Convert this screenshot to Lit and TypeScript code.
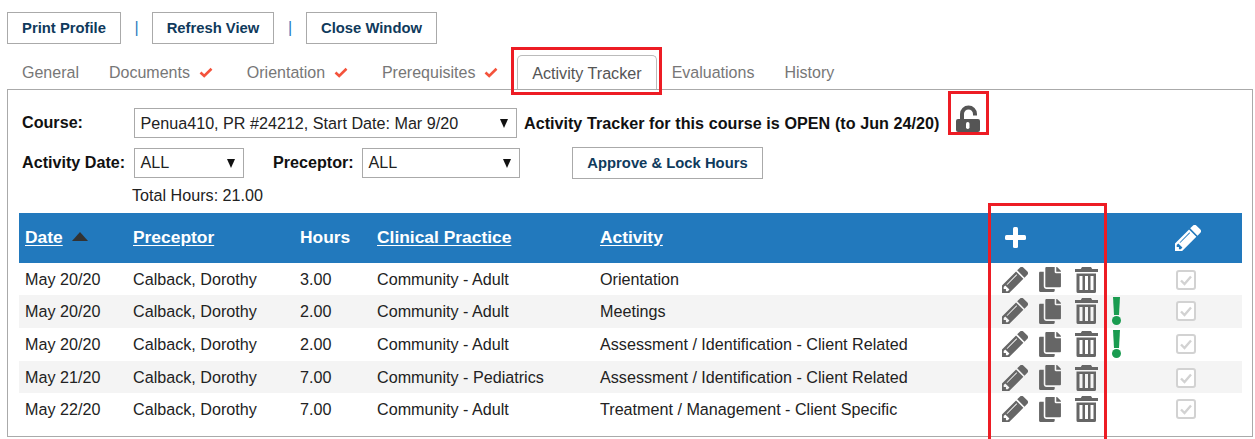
import { LitElement, html, css, svg } from "lit";
import { customElement } from "lit/decorators.js";

const PENCIL = "M491 1536l91-91-235-235-91 91v107h128v128h107zm523-928q0-22-22-22-10 0-17 7l-542 542q-7 7-7 17 0 22 22 22 10 0 17-7l542-542q7-7 7-17zm-54-192l416 416-832 832h-416v-416zm683 96q0 53-37 90l-166 166-416-416 166-165q36-38 90-38 53 0 91 38l235 234q37 39 37 91z";
const COPY = "M320 448v40c0 13.255-10.745 24-24 24H24c-13.255 0-24-10.745-24-24V120c0-13.255 10.745-24 24-24h72v296c0 30.879 25.121 56 56 56h168zm0-344V0H152c-13.255 0-24 10.745-24 24v368c0 13.255 10.745 24 24 24h272c13.255 0 24-10.745 24-24V128H344c-13.2 0-24-10.8-24-24zm120.971-31.029L375.029 7.029A24 24 0 0 0 358.059 0H352v96h96v-6.059a24 24 0 0 0-7.029-16.97z";
const TRASH = "M7 0h9l1.2 2H23v3H0V2h5.8zM1.5 6.5h19.5V24.5q0 1.5-1.5 1.5H3q-1.5 0-1.5-1.5zM4.5 9v14h3V9zM10 9v14h3V9zM15.5 9v14h3V9z";

const pencil = (c: string) => svg`<svg class=${c} viewBox="160 160 1480 1480" fill="currentColor"><path d=${PENCIL}/></svg>`;
const copy = () => svg`<svg class="copy" viewBox="0 0 448 512" fill="currentColor"><path d=${COPY}/></svg>`;
const trash = () => svg`<svg class="trash" viewBox="0 0 23 26" fill="currentColor"><path fill-rule="evenodd" d=${TRASH}/></svg>`;
const tick = () => svg`<svg class="tick" viewBox="0 0 14 11"><path d="M1.5 5.5 5.2 9 12.5 1.8" fill="none" stroke="#f4533c" stroke-width="2.6"/></svg>`;
const box = () => svg`<svg class="box" viewBox="0 0 20 20"><rect x="1" y="1" width="18" height="18" rx="2" fill="#fff" stroke="#d2d2d2" stroke-width="2"/><path d="M5 10.5 8.5 14 15 6.5" fill="none" stroke="#d2d2d2" stroke-width="2.4"/></svg>`;

const TABS = [
  { t: "General" }, { t: "Documents", c: 1 }, { t: "Orientation", c: 1 }, { t: "Prerequisites", c: 1 },
  { t: "Activity Tracker", a: 1 }, { t: "Evaluations" }, { t: "History" },
];
const ROWS = [
  ["May 20/20", "Calback, Dorothy", "3.00", "Community - Adult", "Orientation", 0],
  ["May 20/20", "Calback, Dorothy", "2.00", "Community - Adult", "Meetings", 1],
  ["May 20/20", "Calback, Dorothy", "2.00", "Community - Adult", "Assessment / Identification - Client Related", 1],
  ["May 21/20", "Calback, Dorothy", "7.00", "Community - Pediatrics", "Assessment / Identification - Client Related", 0],
  ["May 22/20", "Calback, Dorothy", "7.00", "Community - Adult", "Treatment / Management - Client Specific", 0],
];

@customElement("app-root")
export class AppRoot extends LitElement {
  static styles = css`
    :host { display: block; position: relative; width: 1255px; height: 439px; overflow: hidden; box-sizing: border-box; padding: 12px 2px 0 7px; background: #fff; font: 16.15px "Liberation Sans", Arial, sans-serif; color: #111; }
    .actions { display: flex; align-items: center; height: 32px; }
    .btn { box-sizing: border-box; height: 32px; display: flex; align-items: center; justify-content: center; border: 1px solid #aaa; background: #fff; color: #0f3a5c; font-weight: bold; font-size: 14.8px; }
    .b1 { width: 114px; } .b2 { width: 122px; } .b3 { width: 131px; }
    .sep { width: 31px; text-align: center; color: #2b7bbd; font-size: 16px; }
    .sep2 { width: 32px; }
    .tabs { display: flex; height: 34px; margin-top: 11px; color: #777; font-size: 16.03px; }
    .tab { display: flex; align-items: center; padding: 1px 15px 0; }
    .tab.on { box-sizing: border-box; height: 34px; border: 1px solid #bbb; border-bottom: 0; border-radius: 5px 5px 0 0; padding: 1px 14px 0; color: #555; font-size: 16.15px; }
    .tick { width: 14px; height: 11px; margin: 0 3.8px 0 9px; }
    .panel { box-sizing: border-box; height: 348px; border: 1px solid #aaa; padding: 18px 11px 0 11px; }
    .line { display: flex; align-items: center; }
    .l1 { height: 30px; }
    .l2 { height: 32px; margin-top: 9px; }
    .lab { font-weight: bold; color: #111; margin-bottom: 2px; }
    .lab.course { margin-left: 3px; width: 112px; }
    .lab.date { margin-left: 3px; width: 112px; }
    .lab.prec { margin-left: 29px; width: 89px; }
    .sel { box-sizing: border-box; height: 30px; border: 1px solid #aaa; display: flex; align-items: center; justify-content: space-between; padding: 0 8px 0 5.5px; color: #222; }
    .s2 span, .s3 span { margin-bottom: 2px; }
    .caret { width: 0; height: 0; border-left: 4.5px solid transparent; border-right: 4.5px solid transparent; border-top: 9px solid #111; }
    .s1 { width: 383px; } .s2 { width: 110px; } .s3 { width: 158px; }
    .status { font-weight: bold; margin-left: 7px; word-spacing: 0.2px; color: #111; white-space: nowrap; }
    .lock { width: 24px; height: 27px; margin: 0 0 9px 17px; color: #555; flex: none; }
    .approve { width: 191px; margin-left: 52px; height: 32px; }
    .total { margin: 7px 0 0 113px; height: 18px; line-height: 18px; color: #222; }
    table { border-collapse: collapse; table-layout: fixed; width: 1223px; margin-top: 9px; }
    th { background: #2279bd; color: #fff; height: 50px; padding: 0 0 1px 6px; box-sizing: border-box; text-align: left; font-size: 17.4px; font-weight: bold; }
    th u { text-underline-offset: 2px; }
    td { height: 33px; padding: 0 0 1px 6px; box-sizing: border-box; color: #222; }
    tbody tr:nth-child(3n + 1) td { height: 32px; padding: 1px 0 0 6px; }
    tbody tr:nth-child(even) td { background: #f4f4f4; }
    .arrow { display: inline-block; width: 0; height: 0; margin-left: 9px; border-left: 8px solid transparent; border-right: 8px solid transparent; border-bottom: 9px solid #333; vertical-align: 2px; }
    .icons { display: flex; align-items: center; color: #666; height: 31px; }
    .pen { width: 26px; height: 26px; flex: none; }
    .copy { width: 22px; height: 25px; margin-left: 11px; flex: none; }
    .trash { width: 23px; height: 26px; margin-left: 14px; flex: none; }
    .excl { width: 9px; height: 28px; margin-left: 14px; color: #1a9c50; flex: none; }
    .hplus { width: 21px; height: 21px; display: block; margin-left: 3px; }
    .hpen { width: 26px; height: 26px; display: block; }
    .box { width: 20px; height: 20px; display: block; margin-left: 1px; }
    .mark { position: absolute; box-sizing: border-box; border: 3px solid #ed1c24; }
    .m1 { left: 511px; top: 47px; width: 151px; height: 48px; }
    .m2 { left: 948px; top: 91px; width: 41px; height: 44px; }
    .m3 { left: 988px; top: 203px; width: 119px; height: 250px; }
  `;

  render() {
    return html`
      <div class="actions">
        <div class="btn b1">Print Profile</div><div class="sep">|</div>
        <div class="btn b2">Refresh View</div><div class="sep sep2">|</div>
        <div class="btn b3">Close Window</div>
      </div>
      <div class="tabs">
        ${TABS.map((x) => html`<div class="tab ${x.a ? "on" : ""}">${x.t}${x.c ? tick() : ""}</div>`)}
      </div>
      <div class="panel">
        <div class="line l1">
          <span class="lab course">Course:</span>
          <div class="sel s1"><span>Penua410, PR #24212, Start Date: Mar 9/20</span><i class="caret"></i></div>
          <span class="status">Activity Tracker for this course is OPEN (to Jun 24/20)</span>
          <svg class="lock" viewBox="0 0 24 27"><path d="M6 14V9a6.5 6.5 0 0 1 13 0v1.5" fill="none" stroke="currentColor" stroke-width="4"/><rect y="14" width="24" height="13" rx="2" fill="currentColor"/><rect x="10" y="17" width="3.5" height="7" rx="1.7" fill="#fff"/></svg>
        </div>
        <div class="line l2">
          <span class="lab date">Activity Date:</span>
          <div class="sel s2"><span>ALL</span><i class="caret"></i></div>
          <span class="lab prec">Preceptor:</span>
          <div class="sel s3"><span>ALL</span><i class="caret"></i></div>
          <div class="btn approve">Approve &amp; Lock Hours</div>
        </div>
        <div class="total">Total Hours: 21.00</div>
        <table>
          <colgroup><col style="width:108px"/><col style="width:167px"/><col style="width:77px"/><col style="width:223px"/><col style="width:402px"/><col style="width:173px"/><col/></colgroup>
          <thead><tr>
            <th><u>Date</u><i class="arrow"></i></th><th><u>Preceptor</u></th><th>Hours</th><th><u>Clinical Practice</u></th><th><u>Activity</u></th>
            <th><svg class="hplus" viewBox="0 0 21 21"><rect x="8" y="0" width="5" height="21" rx="1.5" fill="#fff"/><rect x="0" y="8" width="21" height="5" rx="1.5" fill="#fff"/></svg></th>
            <th>${pencil("hpen")}</th>
          </tr></thead>
          <tbody>
            ${ROWS.map((r) => html`<tr>
              <td>${r[0]}</td><td>${r[1]}</td><td>${r[2]}</td><td>${r[3]}</td><td>${r[4]}</td>
              <td><div class="icons">${pencil("pen")}${copy()}${trash()}${r[5] ? svg`<svg class="excl" viewBox="0 0 9 28" fill="currentColor"><path d="M1 0h7L7 18H2z"/><circle cx="4.5" cy="23.5" r="4.5"/></svg>` : ""}</div></td>
              <td>${box()}</td>
            </tr>`)}
          </tbody>
        </table>
      </div>
      <div class="mark m1"></div><div class="mark m2"></div><div class="mark m3"></div>
    `;
  }
}
